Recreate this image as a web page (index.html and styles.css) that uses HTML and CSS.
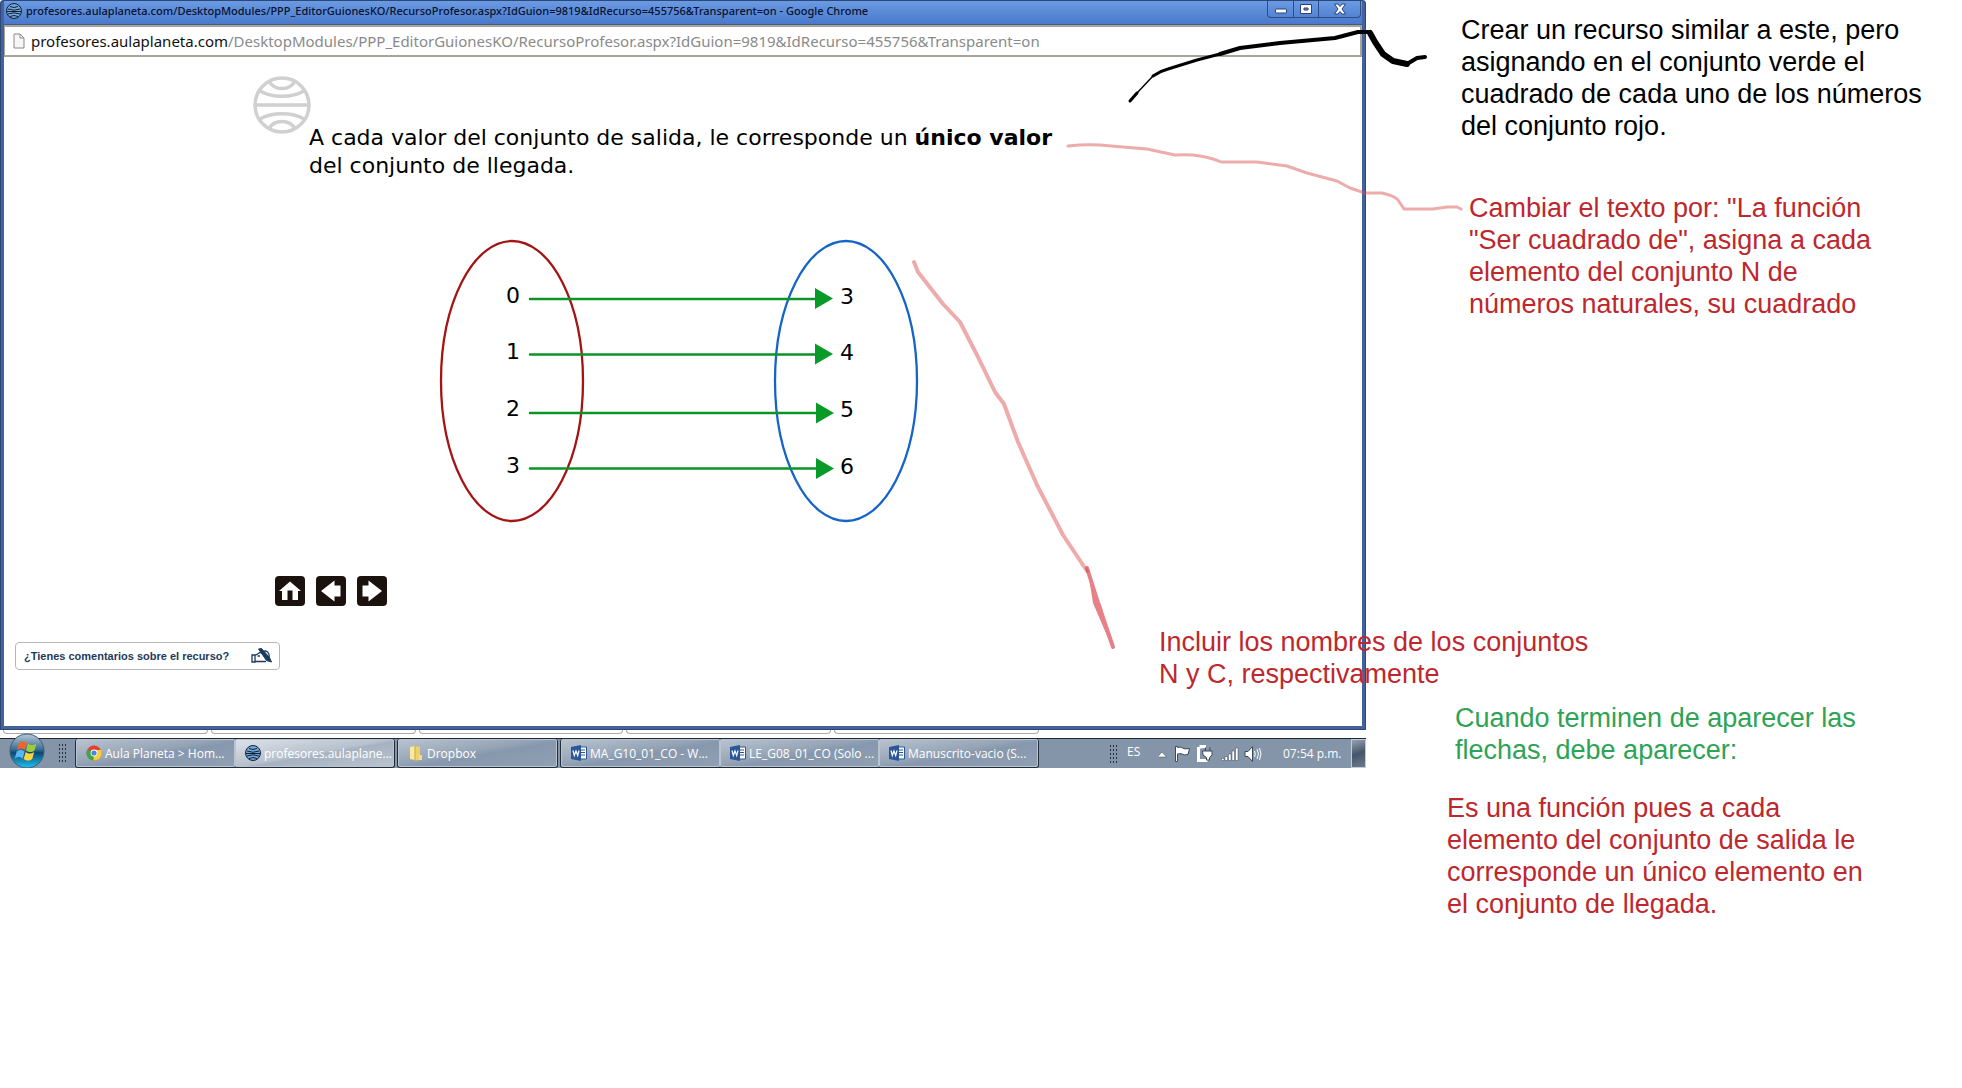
FILE: index.html
```
<!DOCTYPE html>
<html lang="es">
<head>
<meta charset="utf-8">
<title>Recurso del profesor</title>
<link rel="stylesheet" href="styles.css">
</head>
<body>
<main class="board">
  <div class="desktop">
    <section class="window">
      <header class="titlebar">
        <svg class="favicon" viewBox="0 0 16 16"><use href="#globe"/></svg>
        <h1 class="window-title">profesores.aulaplaneta.com/DesktopModules/PPP_EditorGuionesKO/RecursoProfesor.aspx?IdGuion=9819&amp;IdRecurso=455756&amp;Transparent=on - Google Chrome</h1>
        <div class="controls">
          <button class="control" aria-label="Minimizar"><svg width="14" height="12" viewBox="0 0 14 12"><rect x="1.500" y="6" width="11" height="4" rx="1" fill="#fff" stroke="#2b4374"/></svg></button>
          <button class="control" aria-label="Maximizar"><svg width="14" height="12" viewBox="0 0 14 12"><path d="M1.500 1.500h11v9h-11zM5 5v2h4V5z" fill="#fff" fill-rule="evenodd" stroke="#2b4374"/></svg></button>
          <button class="control control-close" aria-label="Cerrar"><svg width="14" height="12" viewBox="0 0 14 12"><path d="M1.500 1H5l2 2.500L9 1h3.500L9 6l3.500 5H9L7 8.500 5 11H1.500L5 6z" fill="#fff" stroke="#2b4374"/></svg></button>
        </div>
      </header>
      <div class="address">
        <svg width="12" height="16" viewBox="0 0 12 16"><path d="M1 1h6l4 4v10H1zM7 1v4h4" fill="#f6f6f6" stroke="#8a8a8a"/></svg>
        <span class="url"><span class="host">profesores.aulaplaneta.com</span>/DesktopModules/PPP_EditorGuionesKO/RecursoProfesor.aspx?IdGuion=9819&amp;IdRecurso=455756&amp;Transparent=on</span>
      </div>
      <div class="page">
        <div class="intro">
          <svg class="logo" viewBox="0 0 58 58" fill="none" stroke="#d0d0d0" stroke-width="3.500"><circle cx="29" cy="29" r="27"/><path d="M2 29h54M16 5c5 10 21 10 26 0M7 15c12 7 32 7 44 0M7 43c12-7 32-7 44 0M16 53c5-10 21-10 26 0"/></svg>
          <p class="statement">A cada valor del conjunto de salida, le corresponde un <strong>único valor</strong><br>del conjunto de llegada.</p>
        </div>
        <svg class="diagram" width="482" height="284" viewBox="438 239 482 284">
          <ellipse cx="512" cy="381" rx="71" ry="140" fill="none" stroke="#a51414" stroke-width="2.300"/>
          <ellipse cx="846" cy="381" rx="71" ry="140" fill="none" stroke="#1565c8" stroke-width="2.300"/>
          <g stroke="#0c9426" stroke-width="2.500" stroke-linecap="round"><path d="M530 299h286M530 354.500h286M530 413h286M530 468.500h286"/></g>
          <g fill="#0a9a28"><path d="M815 288l18 10.500-18 10.500zM815 343.500l18 10.500-18 10.500zM816 402.500l18 10.500-18 10.500zM816 458l18 10.500-18 10.500z"/></g>
          <g class="values">
            <text x="513" y="303">0</text><text x="513" y="359">1</text><text x="513" y="416">2</text><text x="513" y="473">3</text>
            <text x="847" y="304">3</text><text x="847" y="360">4</text><text x="847" y="417">5</text><text x="847" y="474">6</text>
          </g>
        </svg>
        <nav class="pager">
          <button class="pager-button" aria-label="Inicio"><svg viewBox="0 0 30 30"><path d="M15 5.500L26 15h-3v9h-5.500V14.500h-5V24H7v-9H4z" fill="#fff"/></svg></button>
          <button class="pager-button" aria-label="Anterior"><svg viewBox="0 0 30 30"><path d="M5 15L18.500 4.500V9.500h6v11h-6v5z" fill="#fff"/></svg></button>
          <button class="pager-button" aria-label="Siguiente"><svg viewBox="0 0 30 30"><path d="M25 15L11.500 4.500V9.500h-6v11h6v5z" fill="#fff"/></svg></button>
        </nav>
        <button class="feedback">¿Tienes comentarios sobre el recurso?
          <svg width="22" height="16" viewBox="0 0 22 16" fill="none" stroke="#1d3a5c"><path d="M1 7h3v7H1zM4 7.500l5-3 3 1.500M4 13.500h11M9 8H6.500M12 4c4-3 7 2 6 6" stroke-width="1.300"/><path d="M7.500 1l3-.5 8 9 2 4.500-5-1.500z" fill="#1d3a5c"/></svg>
        </button>
      </div>
    </section>
    <div class="cells"><span></span><span></span><span></span><span></span><span></span></div>
    <footer class="taskbar">
      <button class="start" aria-label="Inicio de Windows">
        <svg width="36" height="36" viewBox="0 0 36 36">
          <defs>
            <linearGradient id="orb" x2="0" y2="1"><stop offset="0" stop-color="#b8cad6"/><stop offset=".45" stop-color="#3c6f94"/><stop offset=".55" stop-color="#0d4775"/><stop offset="1" stop-color="#1fc4f0"/></linearGradient>
          </defs>
          <circle cx="18" cy="18" r="17" fill="url(#orb)" stroke="#3f5a75"/>
          <path d="M10 10c3-2 5-2 8 0l-2 7c-3-2-5-2-8 0z" fill="#f0642a"/>
          <path d="M19 10.500c3 2 5 2 8.500 0l-2 7c-3 2-5 2-8.500 0z" fill="#9ccb3b"/>
          <path d="M7.700 18.500c3-2 5-2 8 0l-2 7c-3-2-5-2-8 0z" fill="#5bb5ee"/>
          <path d="M16.700 19c3 2 5 2 8.500 0l-2 7c-3 2-5 2-8.500 0z" fill="#fdd63c"/>
        </svg>
      </button>
      <span class="grip"></span>
      <div class="tasks">
        <div class="group">
          <button class="task"><svg viewBox="0 0 16 16"><circle cx="8" cy="8" r="7.500" fill="#e4402f"/><path d="M1.500 4.200A7.500 7.500 0 0 0 7.500 15.500l3.300-6z" fill="#3da84a"/><path d="M7.500 15.500A7.500 7.500 0 0 0 15 5H8z" fill="#fbd035"/><circle cx="8" cy="8" r="3.400" fill="#fff"/><circle cx="8" cy="8" r="2.600" fill="#4a86e0"/></svg><span>Aula Planeta &gt; Hom...</span></button>
          <button class="task task-active"><svg viewBox="0 0 16 16"><g id="globe"><circle cx="8" cy="8" r="7.500" fill="#6fa8e0" stroke="#16202e"/><path d="M4 3.500q4 2 8 0M2 6q6 2.500 12 0M1 8.500h14M2 11q6-2.500 12 0M4 13.500q4-2 8 0" fill="none" stroke="#16202e"/></g></svg><span>profesores.aulaplane...</span></button>
        </div>
        <div class="group">
          <button class="task"><svg viewBox="0 0 16 16"><path d="M2 2l5-1v14l-5-1z" fill="#f9e9a0"/><path d="M7 1l5 1v13l-5 .5z" fill="#ecd06a"/><path d="M11 10h3v5h-3z" fill="#f5dc86"/><path d="M7 1v14" stroke="#cda83c"/></svg><span>Dropbox</span></button>
        </div>
        <div class="group">
          <button class="task"><svg viewBox="0 0 16 16"><g id="word"><path d="M9 2h6.500v12H9z" fill="#fff" stroke="#2b579a"/><path d="M10 5h4M10 7.500h4M10 10h4" stroke="#2b579a"/><path d="M0 2l10-2v16L0 14z" fill="#2b579a"/><path d="M2 5.500l1.300 5L5 6l1.700 4.500 1.300-5" fill="none" stroke="#fff" stroke-width="1.200"/></g></svg><span>MA_G10_01_CO - W...</span></button>
          <button class="task"><svg viewBox="0 0 16 16"><use href="#word"/></svg><span>LE_G08_01_CO (Solo ...</span></button>
          <button class="task"><svg viewBox="0 0 16 16"><use href="#word"/></svg><span>Manuscrito-vacio (S...</span></button>
        </div>
      </div>
      <div class="tray">
        <span class="grip"></span>
        <span class="language">ES</span>
        <svg width="106" height="18" viewBox="0 0 106 18" fill="#fff" stroke="#3d4a5c">
          <path d="M-.5 12L4 7l4.500 5z" stroke-width=".5"/>
          <path d="M17.500 1.500h2v1q3-1 5 .5 2 1.500 7 .5l-1.500 6q-4 1-6-.5-2-1-4.500 0v7.500h-2z"/>
          <path d="M43 3.500v-2h5M42 3.500h-1.500v12h9" stroke-width="3" stroke="#fff" fill="none"/>
          <path d="M44.500 6h9.500v4l-2.500 2.500V15h-3v-2.500L45 10zM47.500 6V2.500M52 6V2.500"/>
          <path d="M63.500 13.500h2.500v2h-2.500zM67 11.500h2.500v4H67zM70.500 9H73v6.500h-2.500zM74 6h2.500v9.500H74zM77.500 3H80v12.500h-2.500z" stroke-width=".5"/>
          <path d="M87 6.500h3l4.500-5v15l-4.500-5h-3z"/>
          <path d="M96.500 6q1.500 3 0 6M99 4q3 5 0 10M101.500 3q3 6 0 12" fill="none" stroke="#fff"/>
        </svg>
        <time class="clock">07:54 p.m.</time>
        <button class="peek" aria-label="Mostrar escritorio"></button>
      </div>
    </footer>
  </div>

  <svg class="strokes" width="1480" height="660" viewBox="0 0 1480 660" fill="none" stroke-linejoin="round" stroke-linecap="round">
    <path d="M1130 101L1137 93" stroke="#000" stroke-width="3"/>
    <path d="M1137 93L1153 76" stroke="#000" stroke-width="1.500"/>
    <path d="M1153 76Q1160 71 1168 69L1197 60 1220 54" stroke="#000" stroke-width="3"/>
    <path d="M1220 54L1240 48 1280 43 1335 38 1358 32 1370 32" stroke="#000" stroke-width="4"/>
    <path d="M1370 33L1375 42 1383 54 1393 61 1407 64" stroke="#000" stroke-width="6"/>
    <path d="M1407 64L1417 58 1425 57" stroke="#000" stroke-width="4"/>
    <g stroke="#dc5050" stroke-opacity=".48" stroke-width="3">
      <path d="M1068 146Q1085 144 1100 145L1123 147 1147 149 1175 155Q1190 154 1200 156 1212 158 1221 162L1257 162 1287 166 1307 173 1337 181 1350 188 1365 193 1382 193Q1395 196 1398 200L1404 209 1433 209 1447 207 1457 207 1461 209"/>
      <path d="M914 262L918 272 943 304 960 322 978 357 995 392 1004 404 1018 442 1037 485 1063 535 1087 571" stroke-width="4"/>
    </g>
    <path d="M1087 568L1099 606 1113 647" stroke="#d83c46" stroke-opacity=".65" stroke-width="4"/>
    <path d="M1088 572L1093 603 1111 645 1102 608z" fill="#e88088"/>
  </svg>

  <p class="note note-black">Crear un recurso similar a este, pero<br>asignando en el conjunto verde el<br>cuadrado de cada uno de los números<br>del conjunto rojo.</p>
  <p class="note note-text">Cambiar el texto por: "La función<br>"Ser cuadrado de", asigna a cada<br>elemento del conjunto N de<br>números naturales, su cuadrado</p>
  <p class="note note-names">Incluir los nombres de los conjuntos<br>N y C, respectivamente</p>
  <p class="note note-green">Cuando terminen de aparecer las<br>flechas, debe aparecer:</p>
  <p class="note note-final">Es una función pues a cada<br>elemento del conjunto de salida le<br>corresponde un único elemento en<br>el conjunto de llegada.</p>
</main>
</body>
</html>
```
FILE: styles.css
```
* { box-sizing: border-box; }
body { margin: 0; background: #fff; color: #000; font-family: "Noto Sans", sans-serif; }
button { margin: 0; padding: 0; border: 0; background: none; color: inherit; font: inherit; }
svg { display: block; flex: none; }

.board { position: relative; min-height: 100vh; overflow: hidden; }
.desktop { max-width: 1366px; }

.window { border: 4px solid #44639c; border-top: 1px solid #2d4878; border-radius: 4px 4px 0 0; outline: 1px solid #2d4878; outline-offset: -1px; background: #fff; }
.titlebar { display: flex; align-items: flex-start; gap: 4px; height: 24px; padding-left: 2px; background: linear-gradient(#6a9be2, #4a78cc); border-bottom: 1px solid #42598a; }
.favicon { width: 16px; height: 16px; margin-top: 2px; }
.window-title { flex: 1; margin: 2px 0 0; overflow: hidden; white-space: nowrap; font-size: 11px; font-weight: 500; line-height: 16px; color: #06122e; }
.controls { display: flex; margin-right: 1px; border: 1px solid #2f4c88; border-top: 0; border-radius: 0 0 4px 4px; }
.control { display: flex; align-items: center; justify-content: center; width: 25px; height: 16px; }
.control + .control { border-left: 1px solid #2f4c88; }
.control-close { width: 42px; }

.address { display: flex; align-items: center; gap: 6px; height: 32px; padding-left: 8px; border: 2px solid #a8a49a; border-left-width: 1px; }
.url { white-space: nowrap; font-size: 15px; line-height: 24px; color: #8a8a8a; }
.host { color: #111; }

.page { padding: 19px 11px 56px; }
.intro { display: flex; margin-left: 238px; }
.logo { width: 58px; height: 58px; }
.statement { margin: 48px 0 0 -2px; font-family: "DejaVu Sans", sans-serif; font-size: 22px; line-height: 28px; white-space: nowrap; }
.diagram { margin: 59px 0 0 423px; }
.values { font-family: "DejaVu Sans", sans-serif; font-size: 22px; text-anchor: middle; }
.pager { display: flex; gap: 11px; margin: 53px 0 0 260px; }
.pager-button { width: 30px; height: 30px; border-radius: 4px; background: #1c120d; }
.feedback { display: flex; align-items: center; justify-content: space-between; width: 265px; height: 28px; margin-top: 36px; padding: 0 6px 0 8px; border: 1px solid #b4b8bc; border-radius: 4px; font-family: "Liberation Sans", sans-serif; font-size: 11px; font-weight: 700; color: #1d3a5c; }

.cells { display: flex; gap: 3px; height: 8px; padding: 0 327px 4px 3px; }
.cells span { flex: 1; border: 1px solid #aaa; border-top: 0; border-radius: 0 0 4px 4px; }

.taskbar { display: flex; height: 30px; border-top: 1px solid #1e2732; background: #8494a9; color: #fff; font-family: "Open Sans", sans-serif; font-size: 12px; }
.start { width: 45px; margin: -6px 0 0 9px; height: 35px; overflow: hidden; }
.grip { width: 9px; height: 20px; margin: 4px 0 0 4px; background: radial-gradient(circle, #253142 1px, transparent 1px) 0 0 / 3px 4px; }
.tasks { display: flex; flex: 1; gap: 2px; margin-left: 8px; }
.group { display: flex; border: 1px solid #232d3a; border-top-width: 0; border-radius: 3px; }
.task { display: flex; align-items: center; gap: 3px; width: 159px; height: 28px; padding-left: 9px; border: 1px solid #b9c4d0; border-radius: 2px; background: linear-gradient(170deg, #b9c3cf, #94a3b5 45%, #8798ae 55%, #8fa0b3); white-space: nowrap; }
.task svg { width: 16px; height: 16px; }
.task-active { background: linear-gradient(170deg, #dbe1e8, #b7c1cd 50%, #a6b2c1 55%, #bac4cf); }
.tray { display: flex; align-items: center; height: 29px; }
.tray .grip { margin: 0 9px 0 0; }
.language { width: 31px; padding-bottom: 4px; }
.clock { margin-left: 19px; width: 68px; }
.peek { width: 15px; height: 29px; border: 1px solid #c3ccd6; background: linear-gradient(160deg, #97a3b2, #46566a 50%, #6b7a8d); }

/* Hand-drawn strokes and loose notes laid over the canvas */
.strokes { position: absolute; top: 0; left: 0; pointer-events: none; }
.note { position: absolute; margin: 0; font-family: "Liberation Sans", Arial, sans-serif; font-size: 27px; line-height: 32px; white-space: nowrap; color: #be282d; }
.note-black { left: 1461px; top: 14px; color: #000; }
.note-text { left: 1469px; top: 192px; }
.note-names { left: 1159px; top: 626px; }
.note-green { left: 1455px; top: 702px; color: #2ea354; }
.note-final { left: 1447px; top: 792px; }
```
